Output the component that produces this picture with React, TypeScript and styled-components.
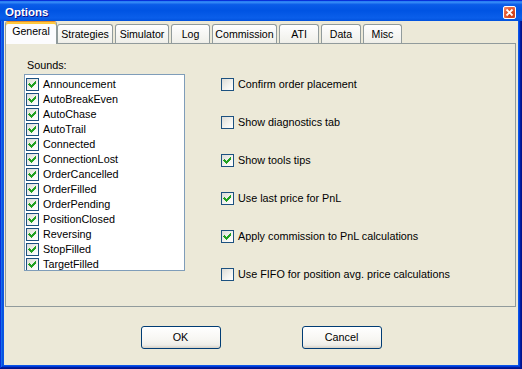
import React from 'react';
import styled, { createGlobalStyle } from 'styled-components';

const Global = createGlobalStyle`
  html, body { margin: 0; padding: 0; background: #ECE9D8; }
  body { font-family: "Liberation Sans", Arial, sans-serif; font-size: 10.8px; color: #000; }
  #root { width: 522px; height: 369px; }
`;

const Window = styled.div`
  width: 522px;
  height: 369px;
  box-sizing: border-box;
  display: flex;
  flex-direction: column;
  background: #0A55E6;
  box-shadow: inset -1px -1px #00138c, inset 1px 1px #0831d9, inset -2px -2px #001ea0,
    inset 2px 2px #166aee, inset -3px -3px #003bda, inset 3px 3px #0855dd;
`;

const TitleBar = styled.div`
  height: 21px;
  box-sizing: border-box;
  padding: 4px 6px 0 5px;
  display: flex;
  align-items: center;
  justify-content: space-between;
  background: linear-gradient(180deg, #0058ee 0%, #3a8ff8 10%, #0a5ce8 22%, #0054e3 50%, #0a5eea 85%, #0051dd 100%);
  box-shadow: inset 0 1px #0831d9;
`;

const Title = styled.span`
  font-family: "Liberation Sans", Arial, sans-serif;
  font-weight: bold;
  font-size: 11.5px;
  line-height: 17px;
  color: #fff;
  text-shadow: 1px 1px #0f1089;
`;

const CloseButton = styled.div`
  width: 13px;
  height: 13px;
  box-sizing: border-box;
  border: 1px solid #fff;
  border-radius: 2px;
  background: radial-gradient(circle at 70% 70%, #c73610 0%, #e4582f 55%, #f19377 100%);
  display: flex;
  align-items: center;
  justify-content: center;
`;

const Body = styled.div`
  flex: 1;
  margin: 0 4px 4px 4px;
  background: #ECE9D8;
  padding: 0 2px 0 1px;
  display: flex;
  flex-direction: column;
`;

const TabStrip = styled.div`
  height: 22px;
  display: flex;
  align-items: flex-end;
  position: relative;
  z-index: 1;
`;

const Tab = styled.div<{ $w: number; $ml: number; $active?: boolean }>`
  width: ${p => p.$w}px;
  margin-left: ${p => p.$ml}px;
  box-sizing: border-box;
  height: ${p => (p.$active ? 23 : 19)}px;
  margin-bottom: ${p => (p.$active ? -1 : 0)}px;
  border: 1px solid #919b9c;
  border-bottom: none;
  border-radius: 3px 3px 0 0;
  background: ${p =>
    p.$active
      ? '#fcfcfe'
      : 'linear-gradient(180deg, #ffffff 0%, #fafaf9 26%, #f0f0ea 95%, #ecebe6 100%)'};
  box-shadow: ${p => (p.$active ? 'inset 0 2px #ffc83c' : 'none')};
  border-top-color: ${p => (p.$active ? '#e68b2c' : '#919b9c')};
  display: flex;
  justify-content: center;
  padding-top: 3px;
  line-height: 13px;
  font-size: 10.6px;
  white-space: nowrap;
`;

const Panel = styled.div`
  height: 264px;
  box-sizing: border-box;
  border: 1px solid #919b9c;
  background: #ECE9D8;
  padding: 15px 0 0 18px;
  display: flex;
  align-items: flex-start;
`;

const LeftColumn = styled.div`
  display: flex;
  flex-direction: column;
`;

const SoundsLabel = styled.div`
  line-height: 13px;
  padding-left: 3px;
  margin-bottom: 2px;
`;

const ListBox = styled.div`
  width: 161px;
  height: 197px;
  box-sizing: border-box;
  border: 1px solid #7f9db9;
  background: #fff;
  padding: 2px 0 0 1px;
  overflow: hidden;
`;

const ListItem = styled.div`
  height: 15px;
  display: flex;
  align-items: center;
`;

const Label = styled.span`
  margin-left: 4px;
  line-height: 13px;
  white-space: nowrap;
`;

const RightColumn = styled.div`
  margin-left: 36px;
  margin-top: 19px;
  display: flex;
  flex-direction: column;
  gap: 25px;
`;

const OptionRow = styled.div`
  height: 13px;
  display: flex;
  align-items: center;
`;

const Box = styled.div`
  width: 13px;
  height: 13px;
  box-sizing: border-box;
  border: 1px solid #1c5180;
  background: linear-gradient(135deg, #dcdcd7 0%, #f4f4f0 60%, #ffffff 100%);
  flex: none;
  display: flex;
`;

const ButtonRow = styled.div`
  margin-top: 19px;
  display: flex;
  justify-content: center;
  gap: 81px;
  padding-left: 1px;
`;

const Button = styled.button`
  width: 80px;
  height: 23px;
  box-sizing: border-box;
  border: 1px solid #003c74;
  border-radius: 3px;
  background: linear-gradient(180deg, #ffffff 0%, #f7f6f2 60%, #eeede8 86%, #d6d0c5 100%);
  font-family: "Liberation Sans", Arial, sans-serif;
  font-size: 10.8px;
  color: #000;
  padding: 0;
  line-height: 21px;
`;

const Check: React.FC<{ checked: boolean }> = ({ checked }) => (
  <Box>
    {checked && (
      <svg width="11" height="11" viewBox="0 0 11 11" shapeRendering="crispEdges">
        <path
          d="M2 4h1v1h1v1h1v-1h1v-1h1v-1h1v-1h1v3h-1v1h-1v1h-1v1h-1v1h-1v-1h-1v-1h-1v-1h-1z"
          fill="#21a121"
        />
      </svg>
    )}
  </Box>
);

const tabs = [
  { label: 'General', w: 52, ml: 0, active: true },
  { label: 'Strategies', w: 56, ml: 0 },
  { label: 'Simulator', w: 54, ml: 2 },
  { label: 'Log', w: 39, ml: 2 },
  { label: 'Commission', w: 65, ml: 2 },
  { label: 'ATI', w: 40, ml: 2 },
  { label: 'Data', w: 40, ml: 2 },
  { label: 'Misc', w: 39, ml: 2 },
];

const sounds = [
  'Announcement', 'AutoBreakEven', 'AutoChase', 'AutoTrail', 'Connected', 'ConnectionLost',
  'OrderCancelled', 'OrderFilled', 'OrderPending', 'PositionClosed', 'Reversing', 'StopFilled', 'TargetFilled',
];

const options = [
  { label: 'Confirm order placement', checked: false },
  { label: 'Show diagnostics tab', checked: false },
  { label: 'Show tools tips', checked: true },
  { label: 'Use last price for PnL', checked: true },
  { label: 'Apply commission to PnL calculations', checked: true },
  { label: 'Use FIFO for position avg. price calculations', checked: false },
];

export default function App() {
  return (
    <>
      <Global />
      <Window>
        <TitleBar>
          <Title>Options</Title>
          <CloseButton>
            <svg width="9" height="9" viewBox="0 0 9 9">
              <path d="M1.5 1.5L7.5 7.5M7.5 1.5L1.5 7.5" stroke="#fff" strokeWidth="1.8" />
            </svg>
          </CloseButton>
        </TitleBar>
        <Body>
          <TabStrip>
            {tabs.map(t => (
              <Tab key={t.label} $w={t.w} $ml={t.ml} $active={t.active}>
                {t.label}
              </Tab>
            ))}
          </TabStrip>
          <Panel>
            <LeftColumn>
              <SoundsLabel>Sounds:</SoundsLabel>
              <ListBox>
                {sounds.map(s => (
                  <ListItem key={s}>
                    <Check checked />
                    <Label>{s}</Label>
                  </ListItem>
                ))}
              </ListBox>
            </LeftColumn>
            <RightColumn>
              {options.map(o => (
                <OptionRow key={o.label}>
                  <Check checked={o.checked} />
                  <Label>{o.label}</Label>
                </OptionRow>
              ))}
            </RightColumn>
          </Panel>
          <ButtonRow>
            <Button>OK</Button>
            <Button>Cancel</Button>
          </ButtonRow>
        </Body>
      </Window>
    </>
  );
}
